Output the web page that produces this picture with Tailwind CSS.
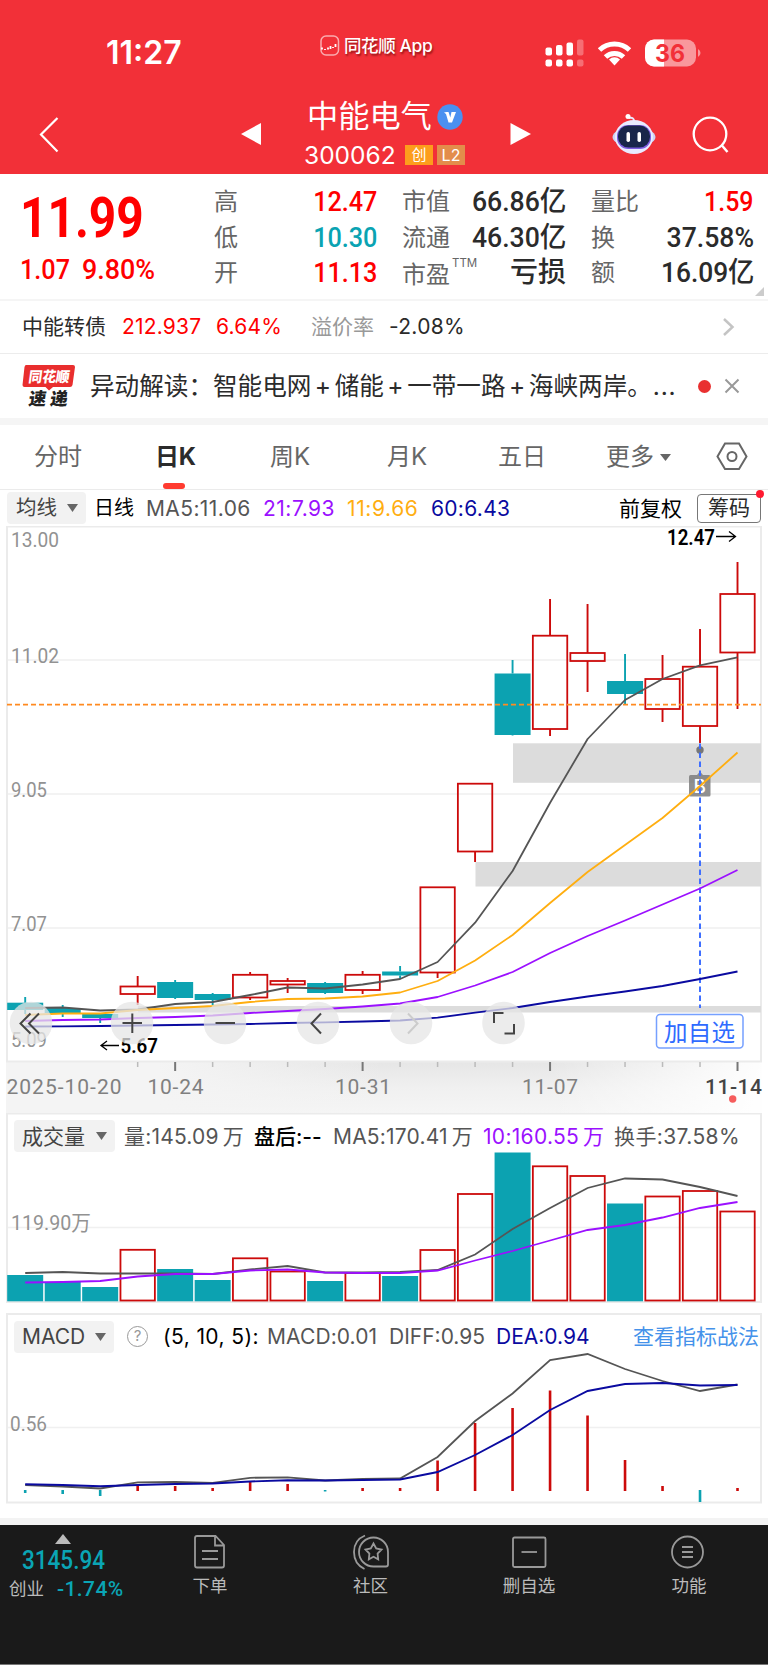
<!DOCTYPE html>
<html lang="zh-CN">
<head>
  <meta charset="UTF-8" />
  <meta name="viewport" content="width=device-width, initial-scale=1.0"/>
  <title>中能电气 300062</title>
  <script src="https://cdn.jsdelivr.net/npm/@tailwindcss/browser@4"></script>
</head>
<body class="bg-white w-[768px] h-[1665px] overflow-hidden font-[Inter,'Noto_Sans_CJK_SC',sans-serif] text-[#2b2b2b] whitespace-nowrap">

  <!-- Header -->
  <header class="h-[174px] bg-[#f23038] text-white">
    <div class="flex items-center h-[92px] pt-[13px]">
      <div class="w-[213px] mr-[107px] pl-[106px] text-[32px] leading-none font-semibold">11:27</div>
      <div class="flex items-center w-[225px] h-[40px] mb-[23px] pt-[9px]">
        <svg class="w-[20px] h-[21px]" viewBox="0 0 20 21" fill="none" stroke="#fff">
          <rect x="1" y="1" width="17.500" height="19" rx="5" stroke-opacity=".6" stroke-width="1.500"/>
          <path d="M2 14.500v-2M5 15v-1M8 12.500v2M10.500 11v3M13 12v1M15.500 9v3" stroke-width="1.800"/>
        </svg>
        <div class="ml-[4px] text-[17.500px] leading-none font-medium tracking-[-0.400px] [text-shadow:1px_2px_2px_rgba(90,0,0,.6)]">同花顺 App</div>
      </div>
      <svg class="w-[160px] h-[30px]" viewBox="545 36.500 160 30" fill="#fff">
        <g>
          <rect x="545.500" y="46" width="6.500" height="8" rx="2"/><rect x="556" y="43.500" width="6.500" height="10.500" rx="2"/>
          <rect x="566.500" y="41" width="6.500" height="13" rx="2"/><rect x="577" y="38" width="6.500" height="16" rx="2" opacity=".3"/>
          <rect x="545.500" y="58" width="6.500" height="7" rx="2"/><rect x="556" y="58" width="6.500" height="7" rx="2"/>
          <rect x="566.500" y="58" width="6.500" height="7" rx="2"/><rect x="577" y="58" width="6.500" height="7" rx="2" opacity=".3"/>
        </g>
        <g fill="none" stroke="#fff" stroke-width="5">
          <path d="M599.500 48.500A22 22 0 0 1 629.500 48.500"/>
          <path d="M605.500 55.500A13 13 0 0 1 623.500 55.500"/>
        </g>
        <path d="M614.500 64l-5.500-6a8 8 0 0 1 11 0z"/>
        <rect x="645" y="38" width="51" height="27" rx="9" opacity=".5"/>
        <path d="M664 38h-10a9 9 0 0 0-9 9v9a9 9 0 0 0 9 9h10z"/>
        <path d="M698 47.500q2.500 1.500 2.500 4t-2.500 4z" opacity=".5"/>
        <text x="655" y="60.500" font-size="24" font-weight="700" fill="#f23038" textLength="30" lengthAdjust="spacingAndGlyphs">36</text>
      </svg>
    </div>
    <div class="flex h-[82px]">
      <svg class="w-[300px] h-[82px]" viewBox="0 92 300 82" fill="none">
        <path d="M57.500 118L41 134.500l16.500 17" stroke="#fff" stroke-width="2.200"/>
        <path d="M241 134l20-11v22z" fill="#fff"/>
      </svg>
      <div class="w-[180px] pl-[7px] pt-[9px]">
        <div class="flex items-center h-[32px]">
          <span class="text-[31.200px] leading-none">中能电气</span>
          <svg class="ml-[5px] w-[26px] h-[26px]" viewBox="0 0 26 26"><circle cx="13" cy="13" r="12.700" fill="#4a90f0"/><path d="M7 8.500l2.500-.5h2l1.800 5.500 1.200-5.500h4.500l-4 10.500h-3.500L9 10z" fill="#fff"/></svg>
        </div>
        <div class="flex items-center h-[30px] mt-[7px] -ml-[3px]">
          <span class="w-[101px] text-[24.500px] leading-none">300062</span>
          <span class="w-[28px] h-[20px] bg-[#fd9d1c] text-[15px] leading-[19px] text-center mr-[4px]">创</span>
          <span class="w-[28px] h-[20px] bg-[#e38d4b] text-[16px] leading-[20px] text-center">L2</span>
        </div>
      </div>
      <svg class="w-[288px] h-[82px]" viewBox="480 92 288 82" fill="none">
        <path d="M531 134l-20.500-11v22z" fill="#fff"/>
        <path d="M629 118q5-1 5 3" stroke="#e8e8ff" stroke-width="2"/><circle cx="628" cy="116.500" r="2.500" fill="#fff"/>
        <ellipse cx="634" cy="137" rx="21.500" ry="10" fill="#cdd2f5"/>
        <ellipse cx="634" cy="137" rx="19" ry="17" fill="#e9ebff"/>
        <rect x="617" y="125" width="34" height="24" rx="11" fill="#7d5de0"/>
        <rect x="618" y="125.500" width="32" height="22" rx="10.500" fill="#19264a"/>
        <rect x="626.500" y="132" width="3.500" height="10" rx="1.700" fill="#fff"/><rect x="637.500" y="132" width="3.500" height="10" rx="1.700" fill="#fff"/>
        <circle cx="710" cy="134" r="16.300" stroke="#fff" stroke-width="2.300"/><path d="M721.500 145l6 7" stroke="#fff" stroke-width="2.500"/>
      </svg>
    </div>
  </header>

  <!-- Quote summary -->
  <section class="relative flex h-[127px] pt-[10px] border-b-2 border-[#f5f5f5] text-[24px] text-[#666]">
    <div class="w-[214px] pl-[20px] text-[#ff0000] font-[Roboto]">
      <div class="mt-[4px] text-[55px] leading-[60px] font-bold origin-left scale-x-[.87]">11.99</div>
      <div class="flex text-[28px] leading-[41px] font-medium mt-px">
        <span class="w-[62px] origin-left scale-x-[.9]">1.07</span><span class="origin-left scale-x-[.96]">9.80%</span>
      </div>
    </div>
    <div class="w-[163px] leading-[35.500px]">
      <div class="flex justify-between"><span>高</span><span class="font-[Roboto] text-[28px] font-medium text-[#ff0000] origin-right scale-x-[.9]">12.47</span></div>
      <div class="flex justify-between"><span>低</span><span class="font-[Roboto] text-[28px] font-medium text-[#0aa3b2] origin-right scale-x-[.9]">10.30</span></div>
      <div class="flex justify-between"><span>开</span><span class="font-[Roboto] text-[28px] font-medium text-[#ff0000] origin-right scale-x-[.9]">11.13</span></div>
    </div>
    <div class="w-[164px] ml-[25px] leading-[35.500px]">
      <div class="flex justify-between"><span>市值</span><span class="font-[Roboto,'Noto_Sans_CJK_SC'] text-[28px] font-medium text-[#2b2b2b] origin-right scale-x-[.95]">66.86亿</span></div>
      <div class="flex justify-between"><span>流通</span><span class="font-[Roboto,'Noto_Sans_CJK_SC'] text-[28px] font-medium text-[#2b2b2b] origin-right scale-x-[.95]">46.30亿</span></div>
      <div class="flex justify-between"><span class="pt-[2px]">市盈<sup class="ml-[2px] text-[11.500px] -top-[16px]">TTM</sup></span><span class="text-[28px] font-medium text-[#2b2b2b]">亏损</span></div>
    </div>
    <div class="w-[163px] ml-[25px] leading-[35.500px]">
      <div class="flex justify-between"><span>量比</span><span class="font-[Roboto] text-[28px] font-medium text-[#ff0000] origin-right scale-x-[.89]">1.59</span></div>
      <div class="flex justify-between"><span>换</span><span class="font-[Roboto] text-[28px] font-medium text-[#2b2b2b] origin-right scale-x-[.95]">37.58%</span></div>
      <div class="flex justify-between"><span>额</span><span class="font-[Roboto,'Noto_Sans_CJK_SC'] text-[28px] font-medium text-[#2b2b2b] origin-right scale-x-[.94]">16.09亿</span></div>
    </div>
    <svg class="absolute right-[4px] bottom-[3px] w-[9px] h-[9px]" viewBox="0 0 9 9"><path d="M9 0v9H0z" fill="#ccc"/></svg>
  </section>

  <!-- Convertible bond -->
  <section class="flex items-center h-[53px] pl-[22px] pb-px border-b border-[#ececec] text-[21px] leading-none">
    <span class="w-[100px]">中能转债</span>
    <span class="w-[94px] text-[#ff0000] tracking-[.2px]">212.937</span>
    <span class="w-[95px] text-[#ff0000] tracking-[.2px]">6.64%</span>
    <span class="w-[78px] text-[#999]">溢价率</span>
    <span class="w-[333px] tracking-[.3px]">-2.08%</span>
    <svg class="w-[13px] h-[20px]" viewBox="0 0 13 20" fill="none" stroke="#c4c4c4" stroke-width="2.500"><path d="M2 2l8.500 8L2 18"/></svg>
  </section>

  <!-- News strip -->
  <section class="flex items-center h-[64px] pl-[22px] text-[24.600px] leading-none">
    <svg class="w-[54px] h-[44px] mr-[14px]" viewBox="22 363 54 44" font-family="Noto Sans CJK SC" font-weight="900">
      <path d="M26 364h47q2 0 2 2l-2.500 18q-.5 2-2.500 2H53l-4 3.500-3.500-3.500H24.500q-2 0-2-2l2-18q.5-2 1.500-2z" fill="#e92e2e"/>
      <text x="0" y="0" transform="translate(28 381) skewX(-8)" font-size="14.500" fill="#fff" textLength="41" lengthAdjust="spacingAndGlyphs">同花顺</text>
      <text x="0" y="0" transform="translate(28 404) skewX(-8)" font-size="17.500" fill="#222" textLength="39">速递</text>
    </svg>
    <div class="w-[607px] flex items-center"><span>异动解读：智能电网</span><span class="w-[23.300px] text-center">+</span><span>储能</span><span class="w-[23.300px] text-center">+</span><span>一带一路</span><span class="w-[23.300px] text-center">+</span><span>海峡两岸。</span><span class="ml-px tracking-[.8px]">...</span></div>
    <span class="w-[13px] h-[13px] rounded-full bg-[#e93030] ml-px"></span>
    <svg class="ml-[13px] w-[16px] h-[16px]" viewBox="0 0 16 16" stroke="#999" stroke-width="2"><path d="M1.500 1.500l13 13M14.500 1.500l-13 13"/></svg>
  </section>
  <div class="h-[7px] bg-[#f5f5f5]"></div>

  <!-- Period tabs -->
  <nav class="flex items-center h-[65px] pl-[34px] border-b border-[#ebebeb] text-[24px] leading-none text-[#666]">
    <span class="w-[121px]">分时</span>
    <span class="relative w-[115px] font-bold text-[#2b2b2b] tracking-[-0.300px]">日K<i class="absolute left-[8px] -bottom-[20px] w-[22px] h-[6px] rounded-full bg-[#ff3b30]"></i></span>
    <span class="w-[117px]">周K</span>
    <span class="w-[111px]">月K</span>
    <span class="w-[108px]">五日</span>
    <span class="w-[54px]">更多</span>
    <svg class="w-[11px] h-[7px] mr-[45px]" viewBox="0 0 11 7"><path d="M0 0h11L5.500 7z" fill="#666"/></svg>
    <svg class="w-[32px] h-[30px]" viewBox="0 0 32 30" fill="none" stroke="#666" stroke-width="2"><path d="M9 1.500h14L30.500 14.500 23 27H9L1.500 14.500z"/><circle cx="16" cy="14.500" r="4.500"/></svg>
  </nav>

  <!-- Moving averages -->
  <div class="flex items-center h-[36px] pl-[7px] text-[21px] leading-none">
    <div class="flex items-center w-[79px] h-[32px] pl-[9px] mr-[8px] rounded bg-[#f2f2f2] text-[20.500px] text-[#444]">均线
      <svg class="ml-[10px] w-[11px] h-[8px]" viewBox="0 0 11 8"><path d="M0 0h11L5.500 8z" fill="#666"/></svg>
    </div>
    <span class="w-[52px] text-[20px] text-black">日线</span>
    <span class="w-[117px] text-[#555] tracking-[.4px]">MA5:11.06</span>
    <span class="w-[84px] text-[#9b10ff] tracking-[.5px]">21:7.93</span>
    <span class="w-[84px] text-[#ffae10] tracking-[.6px]">11:9.66</span>
    <span class="w-[188px] text-[#0a0aa0] tracking-[.3px]">60:6.43</span>
    <span class="w-[78px] text-black">前复权</span>
    <div class="relative w-[64px] h-[29px] border border-[#777] rounded leading-[26px] text-center">筹码<i class="absolute -right-[4px] -top-[5px] w-[8px] h-[8px] rounded-full bg-[#ff1a30]"></i></div>
  </div>

  <!-- Candlestick chart -->
  <svg class="block w-[768px] h-[587px]" viewBox="0 526 768 587" font-family="Roboto">
    <defs>
      <linearGradient id="axisShade" x1="0" y1="0" x2="0" y2="1"><stop offset="0" stop-color="#e6e6e6"/><stop offset=".5" stop-color="#f0f0f0"/><stop offset="1" stop-color="#f5f5f5"/></linearGradient>
      <linearGradient id="axisLeft" x1="0" y1="0" x2="1" y2="0"><stop offset="0" stop-color="#f4f4f4"/><stop offset=".2" stop-color="#f4f4f4"/><stop offset=".5" stop-color="#f4f4f4" stop-opacity="0"/></linearGradient>
      <linearGradient id="axisFade" x1="0" y1="0" x2="1" y2="0"><stop offset=".72" stop-color="#fff" stop-opacity="0"/><stop offset="1" stop-color="#fff" stop-opacity=".95"/></linearGradient>
    </defs>
    <rect x="6" y="1062" width="756" height="51" fill="url(#axisShade)"/>
    <rect x="6" y="1062" width="756" height="51" fill="url(#axisLeft)"/>
    <rect x="6" y="1062" width="756" height="51" fill="url(#axisFade)"/>
    <rect x="7" y="526.500" width="754" height="535" fill="#fff" stroke="#ebebeb" stroke-width="2"/>
    <path d="M8 660h752M8 794h752M8 928h752" stroke="#f0f0f0" stroke-width="1.500"/>
    <g fill="#dcdcdc">
      <rect x="513" y="743.300" width="248" height="39.500"/>
      <rect x="475.500" y="862" width="285.500" height="24.500"/>
      <rect x="138" y="1006" width="623" height="6.500"/>
    </g>
    <g font-size="21" fill="#929292">
      <text x="11" y="547" textLength="48" lengthAdjust="spacingAndGlyphs">13.00</text>
      <text x="11" y="663" textLength="48" lengthAdjust="spacingAndGlyphs">11.02</text>
      <text x="11" y="797" textLength="36" lengthAdjust="spacingAndGlyphs">9.05</text>
      <text x="11" y="931" textLength="36" lengthAdjust="spacingAndGlyphs">7.07</text>
      <text x="11" y="1047" textLength="36" lengthAdjust="spacingAndGlyphs">5.09</text>
    </g>
    <g id="candles"></g>
    <path d="M7 704.700h754" stroke="#ff8a20" stroke-width="1.800" stroke-dasharray="5 3"/>
    <circle cx="700" cy="750" r="3.700" fill="#777"/>
    <path d="M697 775l3-3.500 3 3.500z" fill="#8c8c8c"/>
    <rect x="689" y="775" width="21.500" height="21.500" rx="1.500" fill="#7d7d7d" fill-opacity=".85"/>
    <text x="693.500" y="793" font-size="19" font-family="Inter" font-weight="500" fill="#fff">B</text>
    <path d="M700 743.500V1008" stroke="#3f6fff" stroke-width="2" stroke-dasharray="5.500 3.500"/>
    <g id="priceLines" fill="none" stroke-width="1.800" stroke-linejoin="round"></g>
    <text x="667" y="545" font-size="22.500" font-weight="600" fill="#000" textLength="48" lengthAdjust="spacingAndGlyphs">12.47</text>
    <path d="M716 536.500h19M729 531.500l6.500 5-6.500 5" fill="none" stroke="#000" stroke-width="1.300"/>
    <text x="120.500" y="1053" font-size="21" font-weight="600" fill="#000" textLength="37.500" lengthAdjust="spacingAndGlyphs">5.67</text>
    <path d="M119 1045.500h-18M107 1041l-6 4.500 6 4.500" fill="none" stroke="#000" stroke-width="1.300"/>
    <!-- zoom and scroll buttons -->
    <g fill="#e6e6e6" fill-opacity=".75">
      <circle cx="31" cy="1023" r="21.300"/><circle cx="132" cy="1023" r="21.300"/><circle cx="225" cy="1023" r="21.300"/>
      <circle cx="318" cy="1023" r="21.300"/><circle cx="411" cy="1023" r="21.300"/><circle cx="503.500" cy="1023" r="21.300"/>
    </g>
    <g fill="none" stroke="#444" stroke-width="2">
      <path d="M30.500 1013.500L20.500 1023.500l10 10M39 1013.500L29 1023.500l10 10"/>
      <path d="M122.500 1023H142M132.300 1013.500V1033"/>
      <path d="M215.500 1023H235"/>
      <path d="M321 1013.500L311.500 1023.500l9.500 10"/>
      <path d="M408 1013.500L417.500 1023.500l-9.500 10" stroke="#ccc"/>
      <path d="M494 1023v-10h9.500M514 1024v9.500h-9.500"/>
    </g>
    <rect x="656.500" y="1014.500" width="86.500" height="33.500" rx="3.500" fill="#fff" stroke="#76a0ff" stroke-width="1.500"/>
    <text x="664" y="1040.500" font-size="23.500" font-family="Noto Sans CJK SC" fill="#2f6bff" textLength="71">加自选</text>
    <!-- date axis -->
    <g id="ticks"></g>
    <g font-size="21" fill="#808080">
      <text x="6.500" y="1093.500" textLength="115">2025-10-20</text>
      <text x="147.500" y="1093.500" textLength="56">10-24</text>
      <text x="335" y="1093.500" textLength="56">10-31</text>
      <text x="522" y="1093.500" textLength="56">11-07</text>
      <text x="705" y="1093.500" textLength="57" font-weight="500" fill="#444">11-14</text>
    </g>
    <circle cx="732.700" cy="1099" r="3.700" fill="#f65d5d"/>
  </svg>

  <!-- Volume -->
  <section class="relative h-[200px]">
    <svg class="absolute inset-0 w-[768px] h-[200px]" viewBox="0 1113 768 200" font-family="Roboto">
      <rect x="7" y="1113.500" width="754" height="188.500" fill="#fff" stroke="#ebebeb" stroke-width="2"/>
      <path d="M8 1227.500h752" stroke="#f0f0f0" stroke-width="1.500"/>
      <text x="11" y="1229.500" font-size="21" fill="#929292" font-family="Roboto, Noto Sans CJK SC" textLength="80" lengthAdjust="spacingAndGlyphs">119.90万</text>
      <g id="volume"></g>
    </svg>
    <div class="relative flex items-center h-[46px] pl-[14px] text-[21px] leading-none text-[#555]">
      <div class="flex items-center w-[101px] h-[32px] pl-[8px] mr-[9px] rounded bg-[#f2f2f2] text-[21px] text-[#444]">成交量
        <svg class="ml-[11px] w-[11px] h-[8px]" viewBox="0 0 11 8"><path d="M0 0h11L5.500 8z" fill="#666"/></svg>
      </div>
      <span class="w-[130px] tracking-[.2px]">量:145.09<span class="ml-[4px]">万</span></span>
      <span class="w-[79px] font-medium text-black">盘后:--</span>
      <span class="w-[150px] tracking-[.2px]">MA5:170.41<span class="ml-[4px]">万</span></span>
      <span class="w-[131px] text-[#9b10ff] tracking-[.3px]">10:160.55<span class="ml-[4px]">万</span></span>
      <span class="tracking-[.4px]">换手:37.58%</span>
    </div>
  </section>

  <!-- MACD -->
  <section class="relative h-[205px]">
    <svg class="absolute inset-0 w-[768px] h-[205px]" viewBox="0 1313 768 205" font-family="Roboto">
      <rect x="7" y="1314" width="754" height="188.500" fill="#fff" stroke="#ebebeb" stroke-width="2"/>
      <path d="M8 1427.500h752" stroke="#f0f0f0" stroke-width="1.500"/>
      <text x="10" y="1430.500" font-size="21" fill="#929292" textLength="37" lengthAdjust="spacingAndGlyphs">0.56</text>
      <g id="macd"></g>
    </svg>
    <div class="relative flex items-center h-[47px] pl-[14px] text-[21px] leading-none text-[#555]">
      <div class="flex items-center w-[100px] h-[32px] pl-[8px] mr-[13px] rounded bg-[#f2f2f2] text-[#444]"><span class="w-[73px]">MACD</span>
        <svg class="w-[11px] h-[8px]" viewBox="0 0 11 8"><path d="M0 0h11L5.500 8z" fill="#666"/></svg>
      </div>
      <span class="w-[21px] h-[21px] rounded-full border-[1.500px] border-[#999] text-[15px] leading-[18px] text-center text-[#999] mr-[15px]">?</span>
      <span class="w-[104px] text-black tracking-[.4px]">(5, 10, 5):</span>
      <span class="w-[122px] tracking-[.1px]">MACD:0.01</span>
      <span class="w-[107px]">DIFF:0.95</span>
      <span class="w-[137px] text-[#0a0aa0]">DEA:0.94</span>
      <span class="text-[#4592ea]">查看指标战法</span>
    </div>
  </section>
  <div class="h-[7px] bg-[#f3f3f3]"></div>

  <!-- Bottom bar -->
  <footer class="flex h-[140px] bg-[#1a1a1a] border-b border-[#777] text-[17.500px] leading-none text-[#bbb]">
    <div class="w-[130px] flex flex-col pt-[9px]">
      <svg class="ml-[55px] w-[16px] h-[10px]" viewBox="0 0 16 10"><path d="M8 0l8 10H0z" fill="#bbb"/></svg>
      <span class="ml-[22px] mt-[4px] font-[Roboto] text-[25px] leading-[26px] font-medium text-[#0aa5b5] origin-left scale-x-[.9]">3145.94</span>
      <div class="flex items-center ml-[9px] mt-[4px] h-[22px]"><span class="w-[48px] text-[17.500px]">创业</span><span class="font-[Roboto] text-[21px] font-medium text-[#0aa5b5] tracking-[.4px]">-1.74%</span></div>
    </div>
    <div class="w-[160px] flex flex-col items-center pt-[9px] gap-[7px]">
      <svg class="w-[36px] h-[36px]" viewBox="0 0 36 36" fill="none" stroke="#999" stroke-width="1.800"><path d="M5 2h18.500L32 11v20.500q0 2-2 2H5q-2 0-2-2V4q0-2 2-2zM23 2v9.500h9M10 17h16M10 25h16"/></svg>
      <span>下单</span>
    </div>
    <div class="w-[161px] flex flex-col items-center pt-[9px] gap-[7px]">
      <svg class="w-[36px] h-[36px]" viewBox="0 0 36 36" fill="none" stroke="#999" stroke-width="1.800"><path d="M12 1.500Q1 6 1 18t10.500 17"/><path d="M35 18v12.500q0 2-2 2H20.500A14.500 14.500 0 1 1 35 18z"/><path d="M20.500 9.500l2.700 5 5.300 1-3.900 4 .6 5.800-4.700-2.500-4.700 2.500.6-5.800-3.900-4 5.300-1z"/></svg>
      <span>社区</span>
    </div>
    <div class="w-[156px] flex flex-col items-center pt-[9px] gap-[7px]">
      <svg class="w-[36px] h-[36px]" viewBox="0 0 36 36" fill="none" stroke="#999" stroke-width="1.800"><rect x="2" y="3.500" width="32.500" height="29.500" rx="1.500"/><path d="M10.500 18h15.500"/></svg>
      <span>删自选</span>
    </div>
    <div class="w-[161px] flex flex-col items-center pt-[9px] gap-[7px]">
      <svg class="w-[36px] h-[36px]" viewBox="0 0 36 36" fill="none" stroke="#999" stroke-width="1.800"><circle cx="17.500" cy="18" r="15.500"/><path d="M12 13h11M12 18h11M12 23h11"/></svg>
      <span class="ml-[3px]">功能</span>
    </div>
  </footer>

  <script>
    const RED = '#cc0a0a', TEAL = '#0ca2b1', STEP = 37.49;
    const cx = i => 25.2 + STEP * i;
    const put = (id, html) => { document.getElementById(id).innerHTML = html; };
    const line = (ys, color, w) => `<polyline fill="none" stroke="${color}" stroke-width="${w || 1.8}" points="${ys.map((y, i) => cx(i).toFixed(1) + ',' + y).join(' ')}"/>`;

    // up, body top, body bottom, wick top, wick bottom
    const candles = [
      [0,1002.7,1010,997,1014],[0,1008,1013,1005,1017],[0,1014,1018,1013,1023],[1,986.5,994,976,1005],[0,982,998,980,999],
      [0,994,1000,993,1005],[1,974.8,997.5,972,1000],[1,981,984.5,978,993],[0,983,993,982,994],[1,974.8,990,971,994],
      [0,971.5,975.5,966,979],[1,887.3,972.5,887,978],[1,783.7,851.5,783.5,862],[0,673.5,735,660,735.5],[1,635.7,729,599,736],
      [1,653,661,604,692],[0,681,694,654,705],[1,679,709,655,722],[1,666.7,726,629,743],[1,594,652.5,562,709]
    ];
    put('candles', candles.map(([up, t, b, wt, wb], i) => {
      const x = cx(i), c = up ? RED : TEAL;
      const wick = `<path d="M${x} ${wt}V${t}M${x} ${b}V${wb}" stroke="${c}" stroke-width="1.9"/>`;
      return wick + (up
        ? `<rect x="${x - 17.2}" y="${t}" width="34.4" height="${b - t}" fill="none" stroke="${c}" stroke-width="1.8"/>`
        : `<rect x="${x - 18}" y="${t}" width="36" height="${b - t}" fill="${c}"/>`);
    }).join(''));

    put('priceLines',
      line([1008,1007.5,1010.5,1009.5,1004,1002,995,987.5,988.5,984.5,979,962,922.7,871,802.7,739,700,679,665.3,657.3], '#555') +
      line([1015,1013.5,1013.5,1010,1008,1006,1002,999,998.5,996.5,992.5,981,960.5,935,903,872,845,818,786,752.5], '#ffae10') +
      line([1021,1020,1019.5,1018,1017,1015.5,1013,1011,1009,1006.5,1003.5,997,985.5,972,953,936,920.5,904.5,888.5,870], '#9b10ff') +
      line([1026.5,1026.3,1026,1025.5,1025,1024.5,1024,1023,1022.3,1021.5,1020.5,1017.7,1012.7,1008,1002,996.5,991.5,986,979,971.5], '#0a0aa0'));

    let ticks = '';
    for (let i = 3; i < 20; i++) {
      const major = [4, 9, 14, 19].includes(i);
      ticks += `<path d="M${cx(i)} 1062v${major ? 9 : 5}" stroke="${major ? '#777' : '#bbb'}" stroke-width="${major ? 2 : 1.5}"/>`;
    }
    put('ticks', ticks);

    const vol = [1275,1282,1287,1249.8,1269,1280,1258.3,1271.5,1281,1273,1276,1250,1194,1152.5,1166.3,1176,1203.5,1196.5,1191,1211.5];
    put('volume', vol.map((y, i) => candles[i][0]
        ? `<rect x="${cx(i) - 17.2}" y="${y}" width="34.4" height="${1300.5 - y}" fill="none" stroke="${RED}" stroke-width="1.8"/>`
        : `<rect x="${cx(i) - 18}" y="${y}" width="36" height="${1301.3 - y}" fill="${TEAL}"/>`).join('') +
      line([1273,1272,1273.5,1273.5,1273.5,1274,1269.5,1266,1272.5,1272.5,1272,1270,1254.5,1229,1208,1188,1178.5,1179.5,1187,1196], '#555') +
      line([1282.5,1282,1281,1276.5,1274,1274,1270.5,1269.5,1272.5,1273,1273,1270.5,1260.5,1251,1240.5,1230,1225,1217.5,1208,1202], '#9b10ff'));

    const hist = [1493,1494,1496,1485,1486,1488,1481,1484,1491.5,1488,1488,1460.5,1423,1408,1390.5,1415.5,1460,1486,1502,1488];
    put('macd', hist.map((y, i) => `<path d="M${cx(i)} ${y > 1490 ? 1490 : 1491}V${y}" stroke="${y > 1490 ? TEAL : RED}" stroke-width="2.6"/>`).join('') +
      line([1485,1486.5,1488.5,1482.3,1482,1482.8,1477.8,1477.3,1480.5,1479,1478.5,1457,1421,1393.5,1360,1354,1369,1381,1391,1384.5], '#555') +
      line([1484.3,1485,1486.3,1485,1484,1483.5,1481.5,1480.3,1480.5,1480,1479.5,1472,1455,1435,1410,1391,1384,1383,1385.5,1385], '#0a0aa0', 1.9));
  </script>

</body>
</html>
